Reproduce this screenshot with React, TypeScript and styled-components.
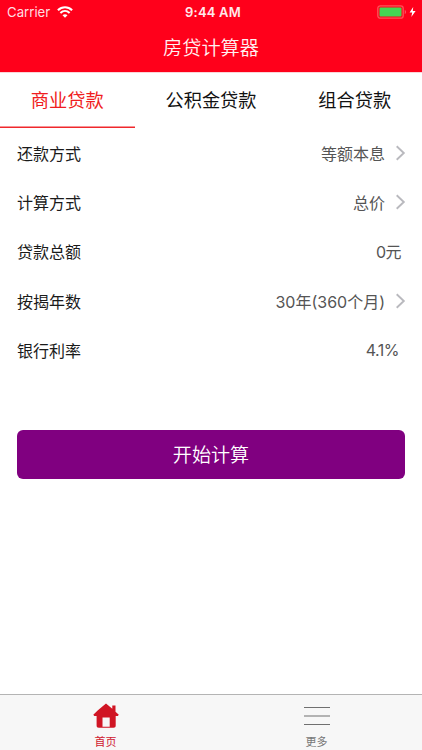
import React from "react";
import styled, { createGlobalStyle } from "styled-components";

const GlobalStyle = createGlobalStyle`
  * { box-sizing: border-box; }
  body {
    margin: 0;
    background: #fff;
    font-family: Inter, "Noto Sans CJK SC", sans-serif;
  }
`;

const Screen = styled.div`
  width: 422px;
  height: 750px;
  display: flex;
  flex-direction: column;
  background: #fff;
  overflow: hidden;
  white-space: nowrap;
`;

const Header = styled.header`
  flex: 0 0 72px;
  background: #ff001b;
  color: #fff;
`;

const StatusBar = styled.div`
  height: 24px;
  padding: 0 5px 0 7px;
  display: grid;
  grid-template-columns: 1fr auto 1fr;
  align-items: center;
  font-size: 13.2px;
`;

const Carrier = styled.div`
  display: flex;
  align-items: center;
  gap: 7px;
  color: #ffdfe2;
`;

const Clock = styled.div`
  font-size: 13px;
  font-weight: 600;
  color: #ffe9eb;
  letter-spacing: 0.2px;
  padding-left: 2px;
`;

const Power = styled.div`
  display: flex;
  justify-content: flex-end;
`;

const Title = styled.h1`
  margin: 0;
  height: 48px;
  line-height: 48px;
  text-align: center;
  font-size: 19.2px;
  font-weight: 350;
  color: #fff0f1;
`;

const Tabs = styled.nav`
  flex: 0 0 56px;
  display: grid;
  grid-template-columns: 134.5px 1fr 134.5px;
  border-top: 1px solid #fbd5d8;
`;

const Tab = styled.button<{ $active?: boolean }>`
  border: 0;
  padding: 0;
  background: none;
  box-shadow: ${(p) => (p.$active ? "inset 0 -1.5px 0 #f0282c" : "none")};
  font: 400 18.2px/55px Inter, "Noto Sans CJK SC", sans-serif;
  color: ${(p) => (p.$active ? "#f01c20" : "#111")};
`;

const Form = styled.main`
  flex: 1;
  display: flex;
  flex-direction: column;
`;

const Row = styled.div`
  height: 49.4px;
  padding: 0 16px 0 17px;
  display: flex;
  align-items: center;
  justify-content: space-between;
  font-size: 16px;
`;

const Label = styled.span`
  color: #1a1a1a;
`;

const Value = styled.span<{ $inset: number; $tight: boolean }>`
  display: flex;
  align-items: center;
  gap: 11px;
  padding-right: ${(p) => p.$inset}px;
  letter-spacing: ${(p) => (p.$tight ? "-0.5px" : "0")};
  color: #555;
`;

const Submit = styled.button`
  margin: 55px 17px 0;
  height: 49px;
  border: 0;
  border-radius: 6px;
  background: #800080;
  color: #fff;
  font: 350 19.1px/49px Inter, "Noto Sans CJK SC", sans-serif;
`;

const TabBar = styled.footer`
  flex: 0 0 56px;
  display: grid;
  grid-template-columns: 1fr 1fr;
  border-top: 1px solid #b4b4b4;
  background: #f7f7f7;
`;

const BarItem = styled.div<{ $active?: boolean }>`
  display: flex;
  flex-direction: column;
  align-items: center;
  padding: 8px 0 0;
  font-size: 11px;
  line-height: 16px;
  gap: 6px;
  color: ${(p) => (p.$active ? "#cf2030" : "#777")};
`;

const WifiIcon = () => (
  <svg width="16" height="12" viewBox="0 0 16 12" fill="none" stroke="#fff" strokeWidth="2.1">
    <path d="M0.9 4.2C5 .2 11 .2 15.1 4.2" />
    <path d="M3.4 6.9c2.7-2.5 6.5-2.5 9.2 0" />
    <path d="M8 11.8 5.5 9.2c1.4-1.2 3.6-1.2 5 0Z" fill="#fff" stroke="none" />
  </svg>
);

const BatteryIcon = () => (
  <svg width="40" height="14" viewBox="0 0 40 14">
    <rect x=".8" y=".8" width="25.4" height="12.4" rx="2.5" fill="none" stroke="#ff5058" strokeWidth="1.3" />
    <rect x="2.5" y="2.5" width="22" height="9" rx="1" fill="#45d553" />
    <path d="M27.8 5c1.3.4 1.3 3.6 0 4Z" fill="#ff7078" />
    <path d="M36.2 2 32.6 7.4h2.6L34.3 12l4.3-6.1h-2.8Z" fill="#fff" />
  </svg>
);

const Chevron = () => (
  <svg width="10" height="16" viewBox="0 0 10 16" fill="none" stroke="#b9b9be" strokeWidth="1.9">
    <path d="m.7 1.3 7.1 6.7-7.1 6.7" />
  </svg>
);

const HomeIcon = () => (
  <svg width="26" height="25" viewBox="0 0 26 25" fill="#d01524">
    <path
      fillRule="evenodd"
      d="M13 .4 4.9 7.3.3 11.8l1 1.2H3.6v9.6c0 1.5.7 2.2 2.2 2.2h14.7c1.5 0 2.2-.7 2.2-2.2V13h2.1l1-1.2-3.3-3V2.6h-3.2v3.1ZM9.5 14.6h7.2v9.2H9.5Z"
    />
  </svg>
);

const MenuIcon = () => (
  <svg width="26" height="25" viewBox="0 0 26 25" stroke="#707070" strokeWidth="1.2">
    <path d="M0 4.5h26M0 13h26M0 21.5h26" />
  </svg>
);

const rows = [
  { label: "还款方式", value: "等额本息", link: true, inset: 0, tight: false },
  { label: "计算方式", value: "总价", link: true, inset: 0, tight: false },
  { label: "贷款总额", value: "0元", link: false, inset: 5, tight: true },
  { label: "按揭年数", value: "30年(360个月)", link: true, inset: 0, tight: false },
  { label: "银行利率", value: "4.1%", link: false, inset: 7, tight: true },
];

export default function App() {
  return (
    <Screen>
      <GlobalStyle />
      <Header>
        <StatusBar>
          <Carrier>
            Carrier <WifiIcon />
          </Carrier>
          <Clock>9:44 AM</Clock>
          <Power>
            <BatteryIcon />
          </Power>
        </StatusBar>
        <Title>房贷计算器</Title>
      </Header>
      <Tabs>
        <Tab $active>商业贷款</Tab>
        <Tab>公积金贷款</Tab>
        <Tab>组合贷款</Tab>
      </Tabs>
      <Form>
        {rows.map((row) => (
          <Row key={row.label}>
            <Label>{row.label}</Label>
            <Value $inset={row.inset} $tight={row.tight}>
              {row.value}
              {row.link && <Chevron />}
            </Value>
          </Row>
        ))}
        <Submit>开始计算</Submit>
      </Form>
      <TabBar>
        <BarItem $active>
          <HomeIcon />
          首页
        </BarItem>
        <BarItem>
          <MenuIcon />
          更多
        </BarItem>
      </TabBar>
    </Screen>
  );
}
